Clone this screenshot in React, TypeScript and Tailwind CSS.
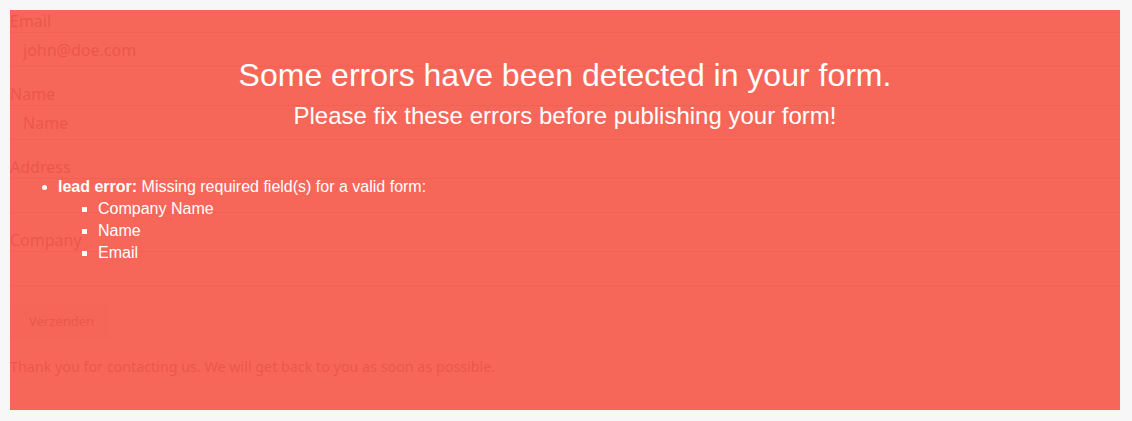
export default function App() {
  const fields = [
    { label: 'Email', placeholder: 'john@doe.com' },
    { label: 'Name', placeholder: 'Name' },
    { label: 'Address', placeholder: '' },
    { label: 'Company', placeholder: '' },
  ];

  return (
    <div className="min-h-screen bg-[#f7f7f7] p-[10px] pr-[12px]">
      <div className="relative h-[400px] font-['Noto_Sans',sans-serif] text-[#666]">
        {/* Form underneath */}
        <form className="flex flex-col">
          {fields.map((f) => (
            <div key={f.label} className="mb-[16px]">
              <label className="block h-[22px] text-[16px] leading-[22px]">{f.label}</label>
              <input
                placeholder={f.placeholder}
                className="block h-[35px] w-full border-y border-[#c8c8c8] bg-transparent pl-[13px] text-[16px] placeholder:text-[#666] outline-none"
              />
            </div>
          ))}
          <button
            type="button"
            className="mt-[1px] h-[37px] w-[100px] bg-[#eeeeee] text-left pl-[19px] text-[13px]"
          >
            Verzenden
          </button>
          <p className="mt-[17px] text-[14.3px] leading-[20px]">
            Thank you for contacting us. We will get back to you as soon as possible.
          </p>
        </form>

        {/* Error overlay */}
        <div className="absolute inset-0 bg-[rgba(246,86,71,0.9)] text-white font-['Liberation_Sans',Arial,sans-serif]">
          <h1 className="pt-[47px] text-center text-[32px] leading-[36px]">
            Some errors have been detected in your form.
          </h1>
          <h2 className="mt-[9px] text-center text-[24px] leading-[28px]">
            Please fix these errors before publishing your form!
          </h2>
          <ul className="mt-[46px] list-disc pl-[48px] text-[16px] leading-[22px]">
            <li>
              <b>lead error:</b> Missing required field(s) for a valid form:
              <ul className="list-[square] pl-[40px]">
                <li>Company Name</li>
                <li>Name</li>
                <li>Email</li>
              </ul>
            </li>
          </ul>
        </div>
      </div>
    </div>
  );
}
